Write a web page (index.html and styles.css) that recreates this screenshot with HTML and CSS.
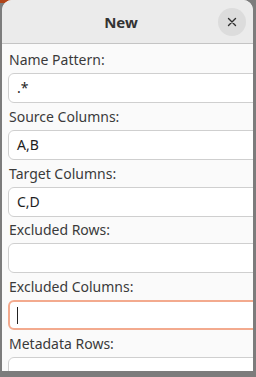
FILE: index.html
```html
<!DOCTYPE html>
<html>
<head>
<meta charset="utf-8">
<link rel="stylesheet" href="styles.css">
</head>
<body>
<div class="dialog">
  <header class="titlebar">
    <span class="title">New</span>
    <button class="close" aria-label="Close">
      <svg width="10" height="10" viewBox="0 0 10 10"><path d="M1.5 1.5 L8.5 8.5 M8.5 1.5 L1.5 8.5" stroke="#2e2e2e" stroke-width="1.4" fill="none" stroke-linecap="round"/></svg>
    </button>
  </header>
  <main class="form">
    <div class="field"><label class="label">Name Pattern:</label><div class="entry">.*</div></div>
    <div class="field"><label class="label">Source Columns:</label><div class="entry">A,B</div></div>
    <div class="field"><label class="label">Target Columns:</label><div class="entry">C,D</div></div>
    <div class="field"><label class="label">Excluded Rows:</label><div class="entry"></div></div>
    <div class="field"><label class="label">Excluded Columns:</label><div class="entry focused"><span class="caret"></span></div></div>
    <div class="field"><label class="label">Metadata Rows:</label><div class="entry"></div></div>
  </main>
</div>
</body>
</html>
```
FILE: styles.css
```css
html, body {
  margin: 0;
  padding: 0;
}
body {
  width: 256px;
  height: 377px;
  overflow: hidden;
  background: linear-gradient(#b04418, #b04418) 0 0 / 12px 3px no-repeat, #7c7c7c;
  font-family: "Noto Sans", "DejaVu Sans", sans-serif;
}
.dialog {
  margin-left: 2px;
  width: 251px;
  height: 371px;
  border-radius: 10px 10px 0 0;
  background: #fafafa;
  overflow: hidden;
  display: flex;
  flex-direction: column;
}
.titlebar {
  height: 43px;
  flex: none;
  background: #ebebeb;
  border-bottom: 1px solid #c4c4c4;
  display: flex;
  align-items: center;
  gap: 7px;
  padding: 0 7px 0 29px;
}
.title {
  flex: 1;
  text-align: center;
  font-weight: bold;
  font-size: 15px;
  color: #333;
}
.close {
  width: 28px;
  height: 28px;
  border: none;
  border-radius: 50%;
  background: #dcdcdc;
  padding: 0;
  display: flex;
  align-items: center;
  justify-content: center;
}
.form {
  padding: 7px 0 0 6px;
  display: flex;
  flex-direction: column;
  gap: 4.8px;
}
.field {
  display: flex;
  flex-direction: column;
  gap: 5px;
}
.label {
  font-size: 14px;
  line-height: 17px;
  color: #3a3a3a;
  padding-left: 1px;
}
.entry {
  box-sizing: border-box;
  width: 270px;
  height: 30px;
  border: 1px solid #cfcfcf;
  border-radius: 6px;
  background: #fff;
  padding: 0 8px;
  font-size: 14px;
  line-height: 28px;
  color: #1e1e1e;
  display: flex;
  align-items: center;
}
.entry.focused {
  border: 2px solid #f3aa8e;
  padding-left: 7px;
}
.caret {
  width: 1px;
  height: 17px;
  background: #222;
}
```
